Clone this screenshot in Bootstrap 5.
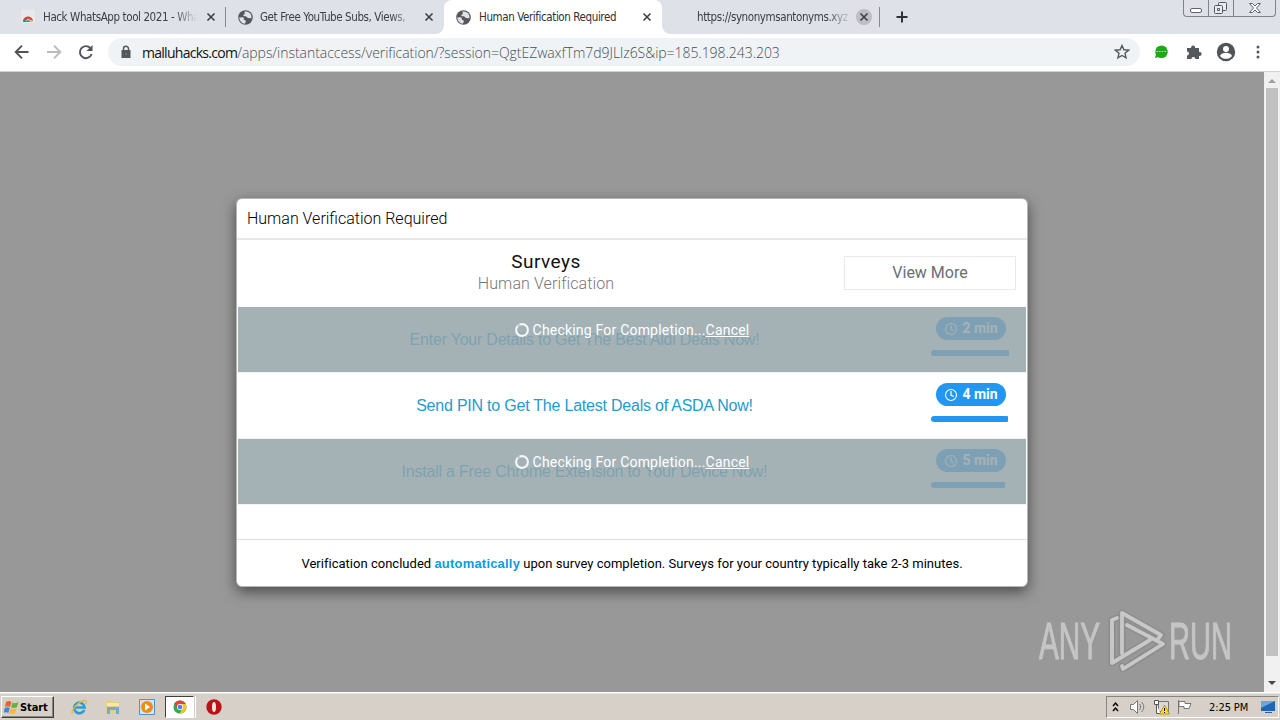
<!DOCTYPE html>
<html lang="en">

<head>
    <meta charset="UTF-8">
    <meta name="viewport" content="width=device-width, initial-scale=1.0">
    <title>Human Verification Required</title>

    <!-- Bootstrap CSS for styling -->
    <link href="https://cdn.jsdelivr.net/npm/bootstrap@5.3.0/dist/css/bootstrap.min.css" rel="stylesheet">

    <style>
        body { width: 1280px; height: 720px; overflow: hidden; font-family: Roboto, "Liberation Sans", sans-serif; color: #222; }
        svg { display: block; flex: none; }

        /* Browser tabs */
        .tab-strip { height: 34px; background: #dee1e8; padding-left: 8px; font: 11.5px "DejaVu Sans Condensed", "DejaVu Sans", sans-serif; }
        .tab { width: 218px; height: 34px; padding: 0 10px 0 12px; color: #3c4043; }
        .tab-title { overflow: hidden; white-space: nowrap; margin-left: 7px; width: 155px; letter-spacing: -.4px; line-height: 16px; }
        .tab-fade { -webkit-mask-image: linear-gradient(90deg, #000 84%, transparent); mask-image: linear-gradient(90deg, #000 84%, transparent); }
        .tab-line { border-right: 1px solid #85888d; height: 20px; margin-left: -1px; }
        .tab-active { background: #fff; border-radius: 8px 8px 0 0; color: #303134; }
        .tab-active::before, .tab-active::after { content: ""; position: absolute; bottom: 0; width: 8px; height: 8px; }
        .tab-active::before { left: -8px; background: radial-gradient(circle at 0 0, transparent 7.5px, #fff 8px); }
        .tab-active::after { right: -8px; background: radial-gradient(circle at 100% 0, transparent 7.5px, #fff 8px); }
        .window-buttons { width: 93px; height: 17px; margin-right: 4px; border: 1px solid #80838a; border-top: 0; border-radius: 0 0 4px 4px; }
        .window-buttons > div { border-right: 1px solid #80838a; height: 16px; }
        .window-buttons > div:last-child { border: 0; }

        /* Address bar */
        .toolbar { height: 38px; background: #fff; border-bottom: 1px solid #d0d2d4; padding: 0 14px 1px 13px; }
        .omnibox { height: 28px; width: 1032px; margin-left: 15px; border-radius: 14px; background: #f0f3f6; padding: 0 10px 0 10px; }
        .url { font: 300 14px "Open Sans", "Noto Sans", sans-serif; color: #4a4d51; margin-left: 8px; white-space: nowrap; letter-spacing: -.04px; }
        .url b { font-weight: 400; color: #111; letter-spacing: -.72px; }

        /* Page */
        .page-area { height: 620px; }
        .page-back { width: 1264px; background: #989898; padding: 126px 0 0 236px; }
        .scroll { width: 16px; background: #f1f1f1; padding: 6px 2px 6px; }
        .scroll-thumb { width: 12px; height: 568px; background: #c1c1c1; }
        .survey-modal { width: 792px; height: 389px; background: #fff; border: 1px solid #b5b5b5; border-radius: 6px; box-shadow: 0 5px 14px rgba(0, 0, 0, .5); padding: 0 1px; }
        .modal-top { height: 41px; margin: 0 -1px; padding: 0 10px; border-bottom: 2px solid #e7e7e7; font-size: 16px; font-weight: 300; color: #000; }
        .summary { height: 67px; }
        .summary-text { width: 606px; line-height: 22px; padding: 0 0 1px 10px; }
        .summary-title { font-size: 19px; color: #111; letter-spacing: .5px; }
        .summary-sub { font-size: 16px; color: #777; font-weight: 300; letter-spacing: .1px; }
        .more-button { width: 172px; height: 34px; margin: 0 10px 2px 0; border: 1px solid #e9e9e9; border-radius: 0; padding: 0; font-size: 16px; color: #6b6e72; }
        .offer { height: 66px; border-bottom: 1px solid #f1f4f5; }
        .offer-title { width: 693px; color: #1f9bcf; font-family: "Liberation Sans", sans-serif; font-size: 16px; letter-spacing: -.22px; }
        .offer-side { width: 78px; padding-top: 10px; }
        .time-pill { width: 70px; height: 23px; border-radius: 12px; background: #2196f3; color: #fff; font-size: 14px; font-weight: 700; margin-left: 5px; }
        .meter { height: 6px; border-radius: 3px 1px 1px 3px; background: #2196f3; margin-top: 10px; }
        .checking { inset: 0 0 0 0; background: rgba(145, 162, 167, .83); color: #fff; font-size: 14px; padding-top: 13px; letter-spacing: .2px; }
        .checking u { text-underline-offset: 1px; }
        .modal-note { height: 47px; margin: 34px -1px 0; padding-top: 1px; border-top: 1px solid #ddd; font-size: 13px; color: #000; letter-spacing: .02px; }
        .modal-note b { color: #0d9bdc; font-family: "Liberation Sans", sans-serif; letter-spacing: .2px; }
        .watermark { right: 32px; top: 536px; font-family: "Liberation Sans", sans-serif; }

        /* Taskbar */
        .taskbar { height: 28px; background: #d6d0c8; border-top: 1px solid #fff; font: 11px "DejaVu Sans Condensed", sans-serif; color: #000; box-shadow: inset 0 1px #e8e4de; }
        .start { width: 53px; height: 22px; margin: 3px 0 0 1px; border: 1px solid; border-color: #fff #404040 #404040 #fff; box-shadow: inset -1px -1px #88857e; font-weight: 700; padding-left: 2px; letter-spacing: -.1px; }
        .quick { padding: 6px 0 0 17px; gap: 18px; }
        .running { width: 29px; height: 22px; margin: -3px -6px 0 -8px; background: #fff; border: 1px solid; border-color: #404040 #fff #fff #404040; box-shadow: 1px 0 #d6d0c8, 2px 0 #fff; }
        .tray { width: 173px; height: 22px; margin: 3px 1px 0 auto; border: 1px solid; border-color: #88857e #fff #fff #88857e; padding: 0 2px 0 5px; letter-spacing: -.1px; }
    </style>
</head>

<body>
    <!-- Shared icon shapes -->
    <svg class="d-none">
        <symbol id="globe" viewBox="0 0 14 14">
            <circle cx="7" cy="7" r="6.8" fill="#54585d" />
            <path d="M1.3 6.5C3 7.700 4 6.300 5.100 7.200c1 .7-.2 1.800.8 2.200 1.100.4 1.600.3 1.400 1.500-.1.9-1 1.200-1 2C3 12.200 1.100 9.500 1.300 6.500zM6.300 1.400c2-.4 4.300.5 5.400 2.200.7 1.300 1 2.600.8 4-1 .3-2-.4-2.800-.2C8.500 7.600 8.500 6.200 7.300 5.800c-1-.2-1.600.2-2.300-.5C4.500 4.600 6 4.300 6.300 3.500c.3-.7-.6-1.200 0-2.100z" fill="#dfe1e5" />
        </symbol>
        <symbol id="close" viewBox="0 0 10 10"><path d="M1.500 1.500l7 7M8.500 1.500l-7 7" stroke="#3c4043" stroke-width="1.600" /></symbol>
        <symbol id="clock" viewBox="0 0 14 14"><circle cx="7" cy="7" r="5.500" fill="none" stroke="#fff" stroke-width="1.100" /><path d="M7 3v4.300l2.800 1.200" fill="none" stroke="#fff" stroke-width="1.200" /></symbol>
        <symbol id="spinner" viewBox="0 0 14 14"><circle cx="7" cy="7" r="5.900" fill="none" stroke="#fff" stroke-opacity=".9" stroke-width="2.100" /><path d="M2.500 3A5.900 5.900 0 0 1 5 1.400" fill="none" stroke="#a3b1b6" stroke-width="2" stroke-opacity=".6" /></symbol>
    </svg>

    <!-- Tabs -->
    <div class="tab-strip d-flex">
        <div class="tab d-flex align-items-center">
            <svg width="16" height="16"><path d="M1 1h14v13H1z" fill="#e7e9ec" /><path d="M3 13a5 5 0 0 1 10-1L8 10z" fill="#dc4437" /><path d="M3 13a5 5 0 0 1 1.500-3.500L7 13z" fill="#22a052" /><path d="M13 12.500L9 10.500V13h4z" fill="#f4c526" /><path d="M6 13a2 2 0 0 1 4 0z" fill="#4285f4" /></svg>
            <div class="tab-title tab-fade">Hack WhatsApp tool 2021 - Wha</div>
            <svg class="ms-auto" width="10" height="10"><use href="#close" /></svg>
        </div>
        <div class="tab-line align-self-center"></div>
        <div class="tab d-flex align-items-center">
            <svg width="15" height="15"><use href="#globe" /></svg>
            <div class="tab-title tab-fade">Get Free YouTube Subs, Views,</div>
            <svg class="ms-auto" width="10" height="10"><use href="#close" /></svg>
        </div>
        <div class="tab tab-active position-relative d-flex align-items-center">
            <svg width="15" height="15"><use href="#globe" /></svg>
            <div class="tab-title ms-2">Human Verification Required</div>
            <svg class="ms-auto" width="10" height="10"><use href="#close" /></svg>
        </div>
        <div class="tab d-flex align-items-center pe-2">
            <div class="tab-title tab-fade" style="margin-left: 23px">https://synonymsantonyms.xyz</div>
            <svg class="ms-auto" width="16" height="16"><circle cx="8" cy="8" r="8" fill="#bcbec3" /><use href="#close" x="3" y="3" width="10" height="10" /></svg>
        </div>
        <div class="tab-line align-self-center"></div>
        <svg class="align-self-center" width="44" height="14"><path d="M16.500 7h11M22 1.500v11" stroke="#303238" stroke-width="2" /></svg>
        <div class="window-buttons d-flex ms-auto">
            <div><svg width="24" height="16"><rect x="6.500" y="8.500" width="11" height="4" rx="1.500" fill="#fff" stroke="#60636c" /></svg></div>
            <div><svg width="24" height="16" fill="#e9ebf0" stroke="#555964"><rect x="9.500" y="2.500" width="8" height="8" rx="1" /><rect x="5.500" y="5.500" width="8" height="8" rx="1" /><path d="M8.500 8.500h2v2h-2z" /></svg></div>
            <div><svg width="41" height="16"><path d="M15.500 3.500h3l2.500 2.500 2.500-2.500h3l-4 4.500 4 4.500h-3L21 10l-2.500 2.500h-3l4-4.500z" fill="#fff" stroke="#60636c" /></svg></div>
        </div>
    </div>

    <!-- Address bar -->
    <div class="toolbar d-flex align-items-center">
        <svg width="80" height="20" fill="none" stroke-width="1.900">
            <path d="M15.500 10H3M9 3.700L2.700 10 9 16.300" stroke="#505357" />
            <path d="M34 10h13M41 3.700l6.300 6.300-6.300 6.300" stroke="#b9bbbd" />
            <path d="M77.500 6.300A6 6 0 1 0 78.600 12" stroke="#505357" /><path d="M79.500 3v6h-6z" fill="#505357" />
        </svg>
        <div class="omnibox d-flex align-items-center">
            <svg width="16" height="16"><path d="M3.500 6h9v8h-9z" fill="#54575b" /><path d="M5.500 6.500V4.700a2.500 2.500 0 0 1 5 0v1.800" fill="none" stroke="#54575b" stroke-width="1.500" /><circle cx="8" cy="10" r="1" fill="#777" /></svg>
            <div class="url"><b>malluhacks.com</b>/apps/instantaccess/verification/?session=QgtEZwaxfTm7d9JLlz6S&amp;ip=185.198.243.203</div>
            <svg class="ms-auto" width="16" height="16"><path d="M8 1.500l1.900 4.300 4.700.4L11 9.300l1.100 4.600L8 11.500l-4.100 2.400L5 9.300 1.400 6.200l4.700-.4z" fill="none" stroke="#54575b" stroke-width="1.400" /></svg>
        </div>
        <div class="d-flex align-items-center ms-auto">
            <svg width="14" height="14"><circle cx="7.500" cy="6.700" r="6.300" fill="#1eaa16" /><path d="M1 13l1-4 3 3z" fill="#1eaa16" /><path d="M2 6.500h11" stroke="#8fd58a" stroke-width="1.200" stroke-dasharray="2 .7" /></svg>
            <svg width="16" height="16" style="margin-left: 18px"><path d="M1 4h4.200a2 2 0 1 1 3.800 0h4v4a2 2 0 1 1 0 3.800V15H9.400a2 2 0 1 0-4 0H1v-3.600a2 2 0 1 0 0-4z" fill="#54575b" /></svg>
            <svg width="20" height="20" style="margin-left: 14px"><circle cx="10" cy="10" r="9.200" fill="#505357" /><circle cx="10" cy="7" r="3" fill="#fff" /><path d="M4 14c1.500-4.400 10.500-4.400 12 0-3 3.800-9 3.800-12 0z" fill="#fff" /></svg>
            <svg width="4" height="16" fill="#54575b" style="margin: 0 6px 0 20px"><circle cx="2" cy="3" r="1.500" /><circle cx="2" cy="8" r="1.500" /><circle cx="2" cy="13" r="1.500" /></svg>
        </div>
    </div>

    <!-- Page with the survey dialog -->
    <div class="page-area d-flex position-relative">
        <div class="page-back">
            <div class="survey-modal">
                <div class="modal-top d-flex align-items-center"><span>Human Verification Required</span></div>
                <div class="summary d-flex align-items-center justify-content-between">
                    <div class="summary-text text-center flex-shrink-0">
                        <div class="summary-title">Surveys</div>
                        <div class="summary-sub">Human Verification</div>
                    </div>
                    <button class="btn more-button flex-shrink-0">View More</button>
                </div>
                <div class="offer d-flex position-relative">
                    <div class="offer-title text-center align-self-center">Enter Your Details to Get The Best Aldi Deals Now!</div>
                    <div class="offer-side">
                        <div class="time-pill d-flex align-items-center justify-content-center gap-1"><svg width="14" height="14"><use href="#clock" /></svg>2 min</div>
                        <div class="meter" style="width: 78px"></div>
                    </div>
                    <div class="checking position-absolute d-flex align-items-start justify-content-center gap-1"><svg width="14" height="14" style="margin-top: 3px"><use href="#spinner" /></svg><span>Checking For Completion...<u>Cancel</u></span></div>
                </div>
                <div class="offer d-flex">
                    <div class="offer-title text-center align-self-center">Send PIN to Get The Latest Deals of ASDA Now!</div>
                    <div class="offer-side">
                        <div class="time-pill d-flex align-items-center justify-content-center gap-1"><svg width="14" height="14"><use href="#clock" /></svg>4 min</div>
                        <div class="meter" style="width: 77px"></div>
                    </div>
                </div>
                <div class="offer d-flex position-relative">
                    <div class="offer-title text-center align-self-center">Install a Free Chrome Extension to Your Device Now!</div>
                    <div class="offer-side">
                        <div class="time-pill d-flex align-items-center justify-content-center gap-1"><svg width="14" height="14"><use href="#clock" /></svg>5 min</div>
                        <div class="meter" style="width: 74px"></div>
                    </div>
                    <div class="checking position-absolute d-flex align-items-start justify-content-center gap-1"><svg width="14" height="14" style="margin-top: 3px"><use href="#spinner" /></svg><span>Checking For Completion...<u>Cancel</u></span></div>
                </div>
                <div class="modal-note d-flex align-items-center justify-content-center"><span>Verification concluded <b>automatically</b> upon survey completion. Surveys for your country typically take 2-3 minutes.</span></div>
            </div>
        </div>
        <div class="scroll d-flex flex-column align-items-center justify-content-between">
            <svg width="8" height="5"><path d="M0 5l4-4 4 4z" fill="#a0a0a0" /></svg>
            <div class="scroll-thumb mb-auto" style="margin-top: 5px"></div>
            <svg width="8" height="5"><path d="M0 0l4 4 4-4z" fill="#444" /></svg>
        </div>

        <!-- Watermark laid over the page -->
        <svg class="watermark position-absolute" width="212" height="68" opacity=".75">
            <g fill="#d4d4d4" stroke="#d4d4d4" stroke-width="1" font-size="51">
                <text x="3" y="51" textLength="61" lengthAdjust="spacingAndGlyphs">ANY</text>
                <text x="133" y="51" textLength="63" lengthAdjust="spacingAndGlyphs">RUN</text>
            </g>
            <g fill="none" stroke="#707070" stroke-opacity=".35" stroke-width="7" stroke-linejoin="round" stroke-linecap="round">
                <path d="M81 10l-5 2v43l38-23M86 45V5l39 22-3 4M91 17l36 19-40 25-1-3" />
            </g>
            <g fill="none" stroke="#d8d8d8" stroke-width="3.800" stroke-linejoin="round" stroke-linecap="round">
                <path d="M81 10l-5 2v43l38-23M86 45V5l39 22-3 4M91 17l36 19-40 25-1-3" />
            </g>
        </svg>
    </div>

    <!-- Taskbar -->
    <div class="taskbar d-flex">
        <div class="start d-flex align-items-center"><svg width="16" height="16"><path d="M2 3c2-1.500 4-1 5.500 0L6 8C4.500 7 3 7 1 8z" fill="#ed6131" /><path d="M8.500 3.500c2 1 4 .8 6-.5L13 8c-2 1.300-4 1.300-6 .3z" fill="#69b141" /><path d="M.800 9c1.800-1.200 3.400-1 5 0l-1.500 5c-1.700-1-3.200-1-5 0z" fill="#3c87d6" /><path d="M6.700 9.300c2 1 4 .8 6-.3l-1.500 5c-2 1.200-4 1.200-6 .3z" fill="#f4bd2a" /></svg><span>Start</span></div>
        <div class="quick d-flex align-items-start">
            <svg width="16" height="16" fill="none"><path d="M13.300 11A5.300 5.300 0 1 1 13.700 8.500H4" stroke="#2d9bdc" stroke-width="2.600" /><path d="M1.500 14.500C-1 11 11-.5 15 2c.8.7.5 2-.3 3" stroke="#e5b83f" stroke-width="1.400" /></svg>
            <svg width="16" height="16"><path d="M1 1h5l1 2h8v11H1z" fill="#e6cf7e" /><path d="M2 4h12v3H2z" fill="#f8e8ac" /><path d="M2 8h12v7h-3v-4H5v4H2z" fill="#69b0d8" /></svg>
            <svg width="16" height="16"><path d="M.500 .500h15v15H.500z" fill="#d0e5f5" stroke="#4d94d0" /><circle cx="8" cy="8" r="6" fill="#ef8c16" /><path d="M6 4.500l5 3.500-5 3.500z" fill="#fff" /></svg>
            <div class="running d-flex align-items-center justify-content-center"><svg width="14" height="14" viewBox="0 0 16 16"><circle cx="8" cy="8" r="7.500" fill="#36a852" /><path d="M8 .500a7.500 7.500 0 0 1 6.500 4H8L5 10 1.500 4.300A7.500 7.500 0 0 1 8 .500z" fill="#df4638" /><path d="M14.500 4.500A7.500 7.500 0 0 1 8 15.500L11 8 8 4.500z" fill="#f8c525" /><circle cx="8" cy="8" r="3.500" fill="#fff" /><circle cx="8" cy="8" r="2.700" fill="#4285f4" /></svg></div>
            <svg width="16" height="16"><circle cx="8" cy="8" r="7.700" fill="#b91218" /><ellipse cx="8" cy="8" rx="2" ry="5" fill="#f2e6e3" /></svg>
        </div>
        <div class="tray d-flex align-items-center">
            <svg width="7" height="12" fill="none" stroke="#000" stroke-width="1.400"><path d="M1 5l2.500-3L6 5M1 10l2.500-3L6 10" /></svg>
            <svg width="17" height="16" fill="none" stroke="#777" style="margin-left: 10px"><path d="M1.500 5.500h3l4-4v13l-4-4h-3z" fill="#fff" /><path d="M10.500 5c1.500 2 1.500 4 0 6M12.500 3c3 3.300 3 6.700 0 10" /></svg>
            <svg width="17" height="16" style="margin-left: 7px"><path d="M5.500 2.500h10v10h-10z" fill="#d7d9da" stroke="#777" /><path d="M1.500 1.500h4v4h-4zM3.500 5.500v9h4" fill="#fff" stroke="#555" /><path d="M11.500 6l5 9h-10z" fill="#ffe01a" stroke="#9c8200" stroke-width=".7" /><path d="M11.500 9v3M11.500 13v1" stroke="#000" /></svg>
            <svg width="17" height="16" style="margin-left: 6px"><path d="M2.500 1v14M3 2.500h6v2h6l-2 5H8v-2H3z" fill="#fff" stroke="#777" /></svg>
            <span class="ms-3">2:25 PM</span>
            <svg class="ms-auto" width="16" height="16"><path d="M1 2h14v10H1z" fill="#2066b5" /><path d="M1 2h14L1 9z" fill="#62a9e6" /><path d="M5 13h7v1H5z" fill="#315f91" /></svg>
        </div>
    </div>

    <!-- Bootstrap JavaScript -->
    <script src="https://cdn.jsdelivr.net/npm/bootstrap@5.3.0/dist/js/bootstrap.bundle.min.js"></script>
</body>

</html>
